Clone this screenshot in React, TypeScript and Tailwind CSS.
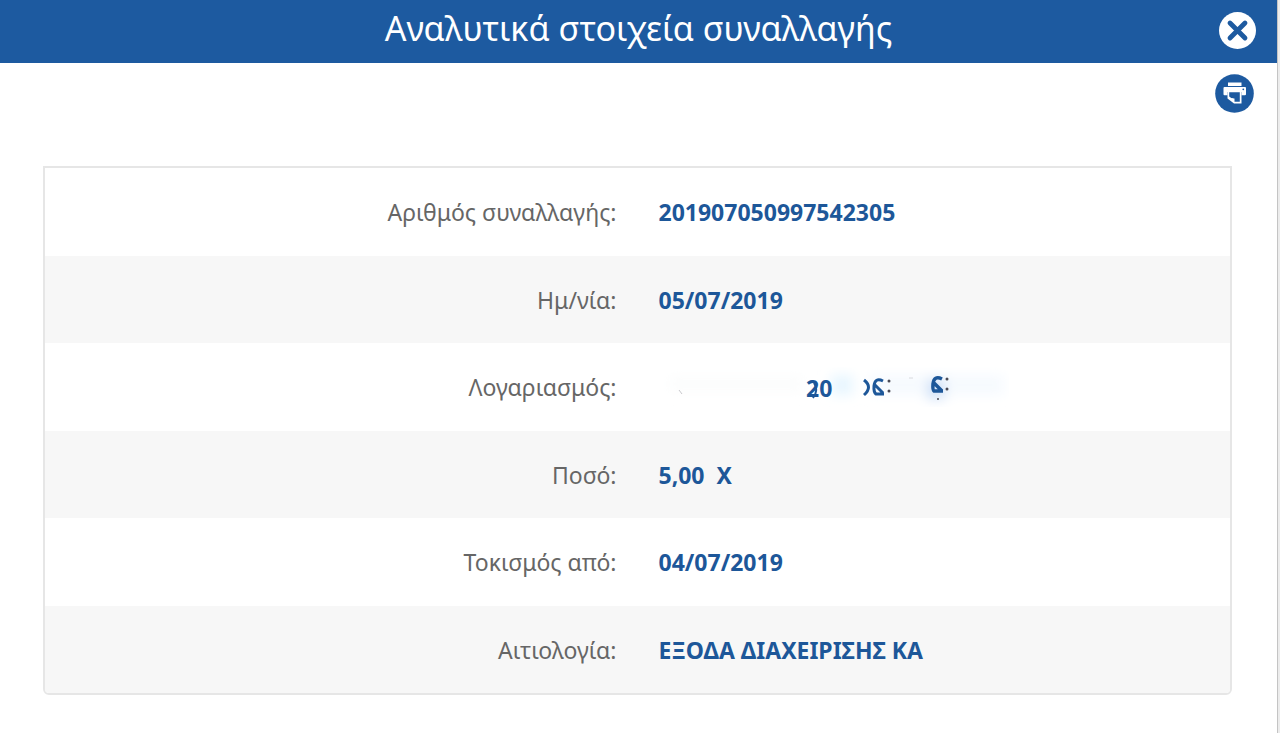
import { FC, ReactNode } from "react";

interface DetailRow {
    label: string;
    value: ReactNode;
}

const CloseIcon: FC = () => (
    <svg viewBox="0 0 37 37" className="size-full" aria-hidden="true">
        <circle cx="18.5" cy="18.5" r="18.5" fill="#fff" />
        <path
            d="M11 11 26 26M26 11 11 26"
            stroke="#1d5aa0"
            strokeWidth="4.8"
            strokeLinecap="round"
        />
    </svg>
);

const PrintIcon: FC = () => (
    <svg viewBox="0 0 39 39" className="size-full" aria-hidden="true">
        <circle cx="19.5" cy="19.5" r="19.3" fill="#1d5aa0" />
        <path d="M13 8.500h13.500v3.500H13z" fill="#fff" />
        <path
            d="M9.500 13h20.500q1 0 1 1v6.200q0 1-1 1h-3.500V18H12.500v3.200h-3q-1 0-1-1V14q0-1 1-1z"
            fill="#fff"
        />
        <circle cx="28.300" cy="15.300" r=".9" fill="#1d5aa0" />
        <path d="M12.500 17h14v12.500h-7.500l-6.500-5z" fill="#fff" />
        <path d="M14.200 18.200h10.600v9.600h-5.300v-3.300h-2.600l-2.700-2z" fill="#1d5aa0" />
        <path d="M14 24.300h4.300v4.200z" fill="#fff" />
    </svg>
);

// account number with most of its digits wiped out
const MaskedAccount: FC = () => (
    <svg
        viewBox="0 0 350 60"
        width="350"
        height="60"
        className="block font-bold"
        fill="#1d5799"
        fontSize="23"
        role="img"
        aria-label="Λογαριασμός"
    >
        <defs>
            <filter id="haze" x="-30%" y="-30%" width="160%" height="160%">
                <feGaussianBlur stdDeviation="6" />
            </filter>
        </defs>
        <g filter="url(#haze)">
            <rect x="10" y="18" width="135" height="18" fill="#fcfdfd" />
            <rect x="172" y="18" width="22" height="20" fill="#e8f6fe" />
            <rect x="210" y="18" width="135" height="20" fill="#f6fafe" />
            <rect x="268" y="22" width="18" height="20" fill="#d2e2f8" />
        </g>
        <text x="147" y="40">20</text>
        <g fill="none" stroke="#1d5799" strokeWidth="3">
            <path d="M155 26q5 7-1 15" strokeWidth="2" />
            <path d="M205 23q9 7 0 15" />
            <path d="M224 24q-8-4-9 5-.5 6 2 8h8M216 28l8 8" />
            <path d="M283 22q-8-4-9 5-.5 6 1 7h9M275 26l8 8" strokeWidth="3.500" />
        </g>
        <g fill="#4a4a55">
            <circle cx="230" cy="24" r="1.500" />
            <circle cx="230" cy="34" r="1.500" />
            <circle cx="288" cy="22" r="1.500" />
            <circle cx="288" cy="32" r="1.500" />
            <circle cx="279" cy="42" r="1" />
        </g>
        <path d="m20 33 3 4" stroke="#c8c8cc" />
        <path d="M250 21h4" stroke="#d8dade" />
    </svg>
);

const rows: DetailRow[] = [
    { label: "Αριθμός συναλλαγής:", value: "201907050997542305" },
    { label: "Ημ/νία:", value: "05/07/2019" },
    { label: "Λογαριασμός:", value: <MaskedAccount /> },
    { label: "Ποσό:", value: "5,00  X" },
    { label: "Τοκισμός από:", value: "04/07/2019" },
    { label: "Αιτιολογία:", value: "ΕΞΟΔΑ ΔΙΑΧΕΙΡΙΣΗΣ ΚΑ" },
];

const App: FC = () => {
    return (
        <div className="flex min-h-screen bg-white font-['Noto_Sans',sans-serif]">
            <div className="flex-1">
                <header className="flex h-[63px] items-center bg-[#1d5aa0] pr-[21px] pb-[3px] pl-[58px]">
                    <h1 className="flex-1 pb-1 text-center text-[34px] leading-[52px] text-white">
                        Αναλυτικά στοιχεία συναλλαγής
                    </h1>
                    <button type="button" aria-label="Κλείσιμο" className="size-[37px]">
                        <CloseIcon />
                    </button>
                </header>
                <main className="pr-[45px] pl-[43px]">
                    <div className="-mr-[22px] flex h-[103px] justify-end pt-[11px]">
                        <button type="button" aria-label="Εκτύπωση" className="size-[39px]">
                            <PrintIcon />
                        </button>
                    </div>
                    <div className="overflow-hidden rounded-b-md border-2 border-[#e6e6e6]">
                        <table className="w-full table-fixed text-[23px] leading-8">
                            <tbody>
                                {rows.map(({ label, value }) => (
                                    <tr
                                        key={label}
                                        className="h-[88px] even:h-[87px] even:bg-[#f7f7f7]"
                                    >
                                        <th
                                            scope="row"
                                            className="w-1/2 p-0 pr-[21px] text-right font-normal text-[#666]"
                                        >
                                            {label}
                                        </th>
                                        <td className="w-1/2 p-0 pl-[21px] font-bold whitespace-pre text-[#1d5799]">
                                            {value}
                                        </td>
                                    </tr>
                                ))}
                            </tbody>
                        </table>
                    </div>
                </main>
            </div>
            <div className="w-[3px] border-l border-[#c4c4c4] bg-[#ececec]" />
        </div>
    );
};
export default App;
